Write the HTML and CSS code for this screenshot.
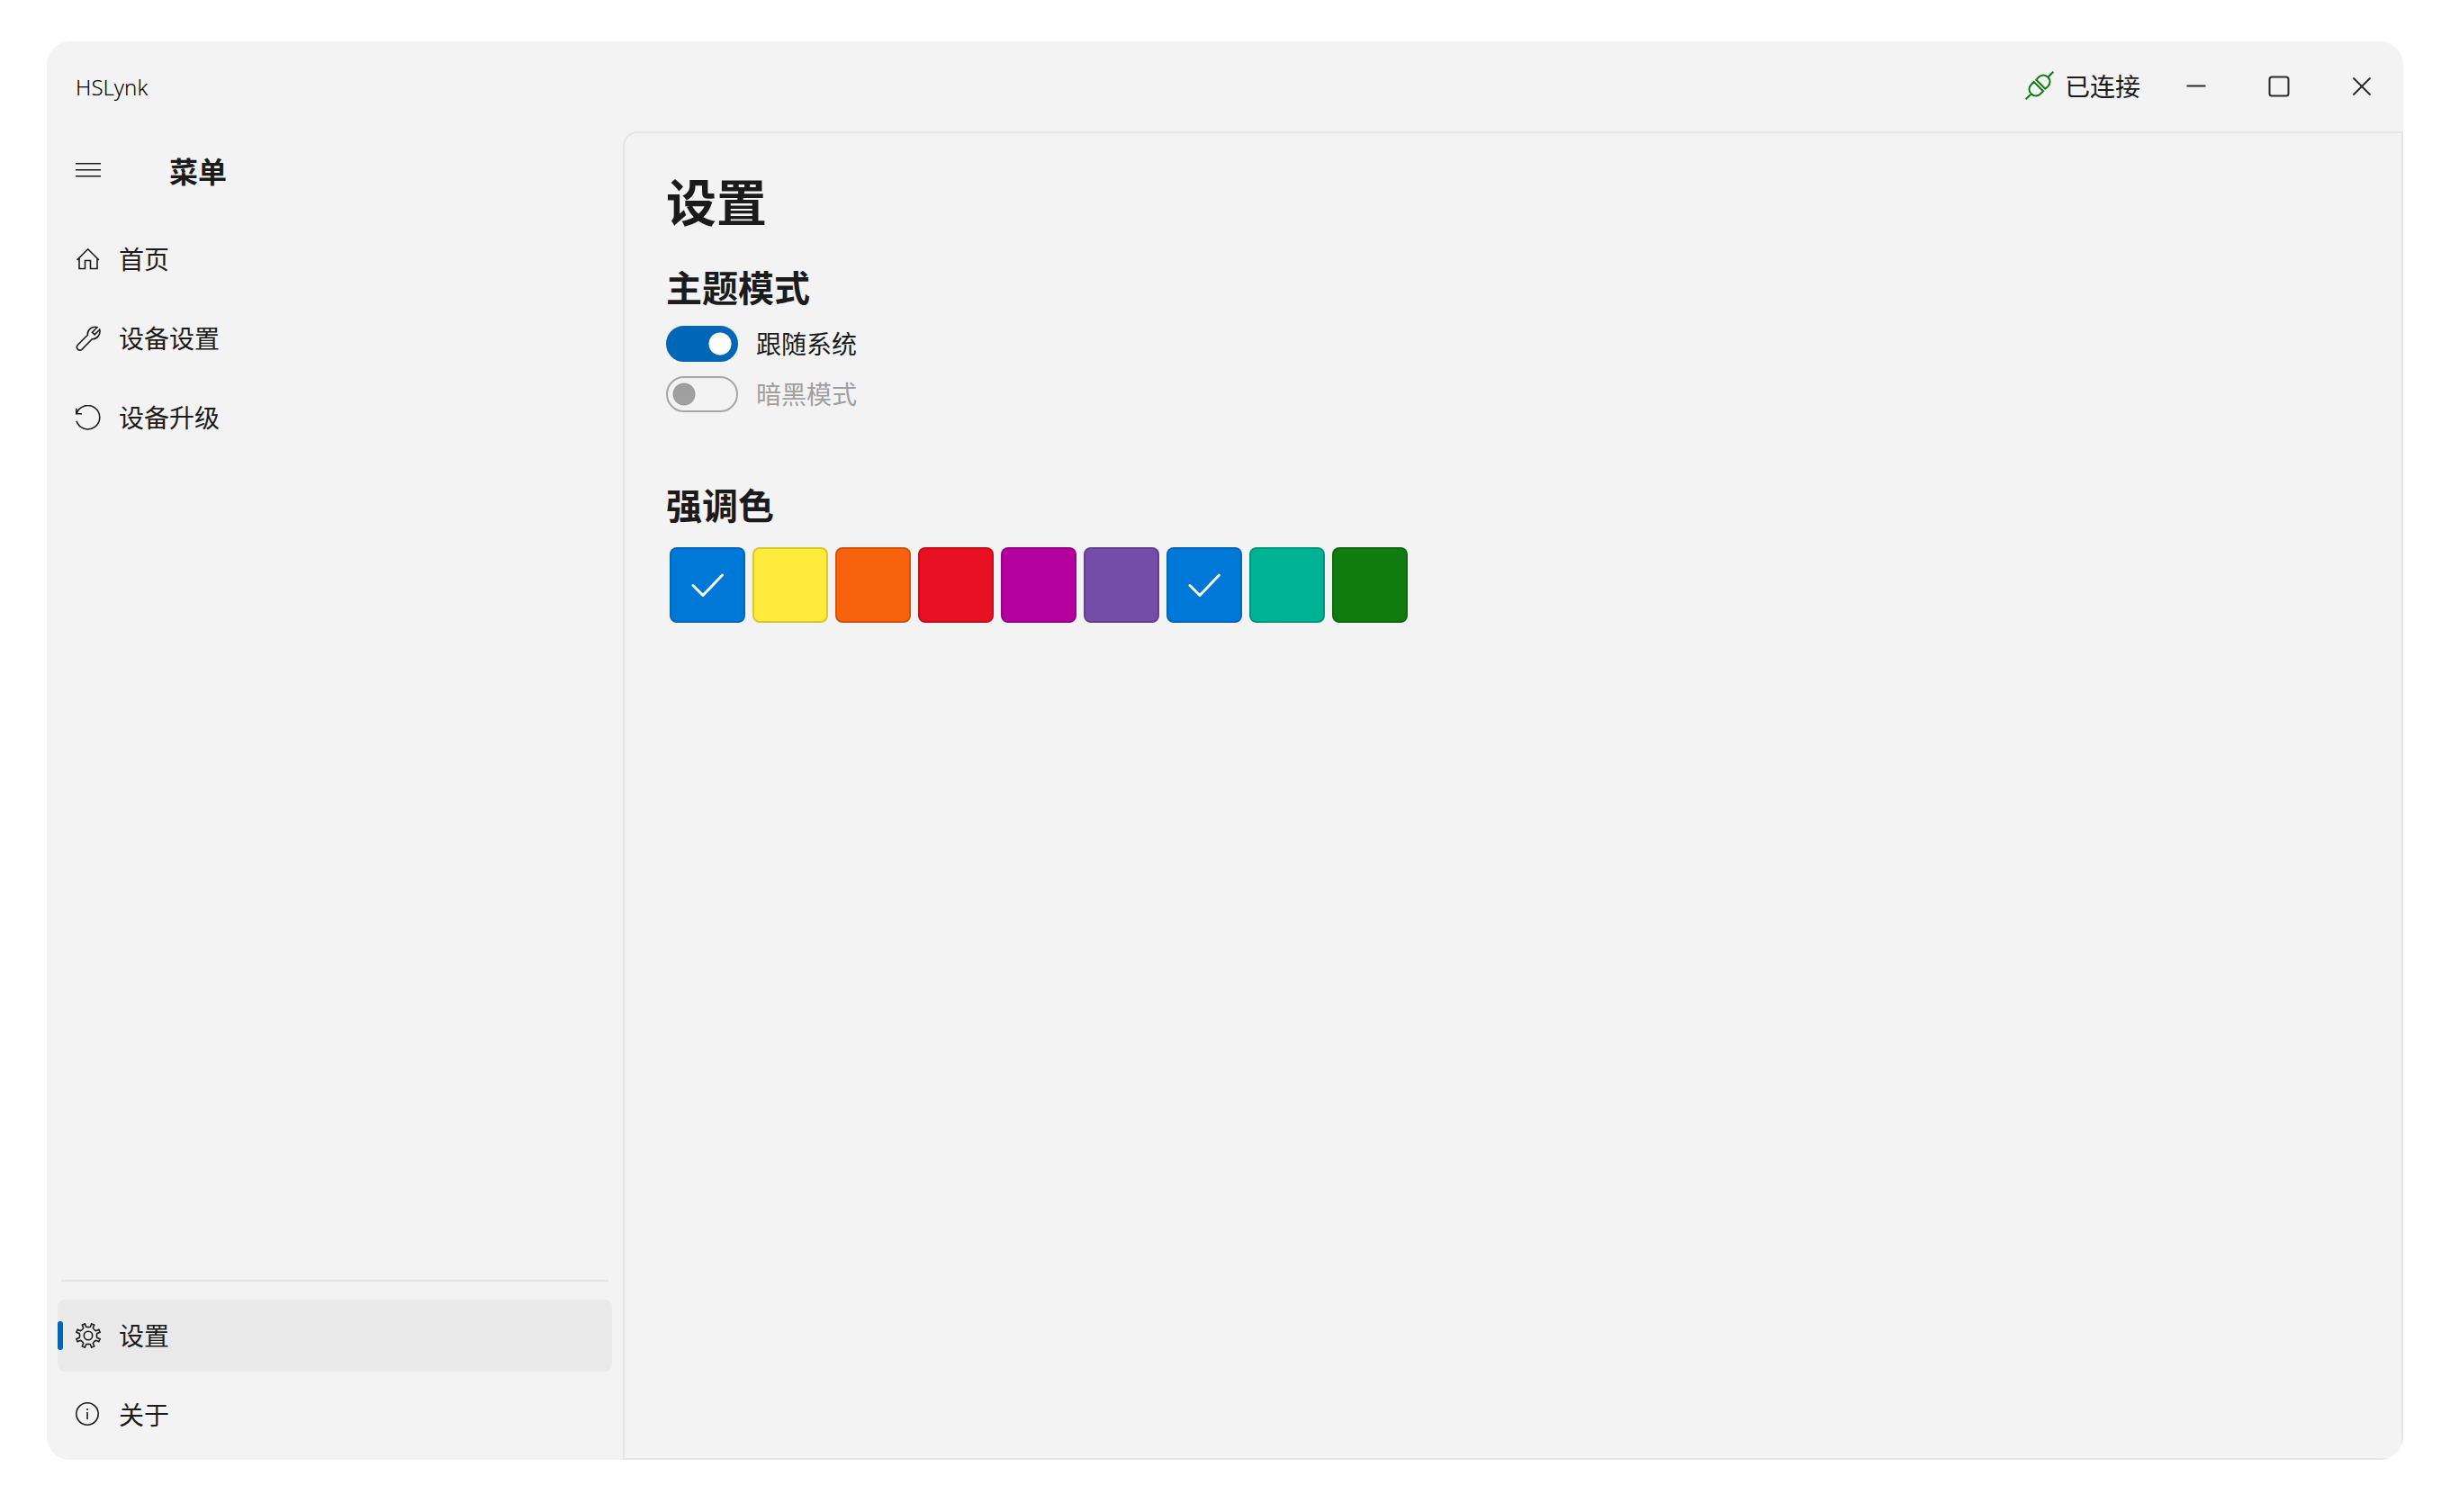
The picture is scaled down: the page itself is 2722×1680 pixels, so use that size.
FILE: index.html
```html
<!DOCTYPE html>
<html lang="zh-CN">
<head>
<meta charset="utf-8">
<meta name="viewport" content="width=device-width, initial-scale=1">
<title>HSLynk</title>
<link rel="stylesheet" href="styles.css">
</head>
<body>
<div class="window">
  <header class="titlebar">
    <span class="app-name">HSLynk</span>
    <div class="status">
      <svg class="status-icon" viewBox="0 0 32 32" aria-hidden="true"><path d="M.7 31.300l6-6M25.300 6.700l6-6M9.700 12L20 22.300L17 25.300C14 28.300 9.700 28.300 6.700 25.300S3.700 18 6.700 15ZM12.300 9.700L22.300 19.700L25.300 17C28.300 14 28.300 9.700 25.300 6.700S18 3.700 15 6.700Z"/></svg>
      <span>已连接</span>
    </div>
    <div class="controls">
      <button class="control" type="button" aria-label="最小化"><svg viewBox="0 0 24 24"><path d="M1.500 11.500h21"/></svg></button>
      <button class="control" type="button" aria-label="最大化"><svg viewBox="0 0 24 24"><rect x="1.500" y="1.500" width="21" height="21" rx="2.500"/></svg></button>
      <button class="control" type="button" aria-label="关闭"><svg viewBox="0 0 24 24"><path d="M2.500 2.500l19 19M21.500 2.500l-19 19"/></svg></button>
    </div>
  </header>
  <div class="body">
    <nav class="sidebar">
      <div class="menu-head">
        <button class="menu-button" type="button" aria-label="菜单"><svg class="icon" viewBox="0 0 28 28"><path d="M0 6.700h28M0 13.700h28M0 20.700h28"/></svg></button>
        <h2 class="menu-title">菜单</h2>
      </div>
      <a class="nav-item" href="#home"><svg class="icon" viewBox="0 0 28 28"><path d="M1.500 15L13.700 2.800 26 15M4 12.500V24.500h6.500v-9h6v9h7.500V12.500"/></svg><span class="label">首页</span></a>
      <a class="nav-item" href="#device"><svg class="icon" viewBox="0 0 28 28"><path d="M24 1.700A8.300 8.300 0 0 0 13.300 10.300L1.900 21.800a3.500 3.500 0 0 0 4.800 4.800L18.300 14.700A8.300 8.300 0 0 0 26.700 4.300L21.200 9.800L18.500 7.200Z"/></svg><span class="label">设备设置</span></a>
      <a class="nav-item" href="#upgrade"><svg class="icon" viewBox="0 0 28 28"><path d="M.8 3.700V9.700h6.200M1 9.700A13.200 13.200 0 1 1 1 17.800"/></svg><span class="label">设备升级</span></a>
      <div class="spacer"></div>
      <hr class="divider">
      <a class="nav-item active" href="#settings" aria-current="page"><svg class="icon" viewBox="0 0 28 28"><circle cx="14" cy="14" r="4.700"/><path d="M10.300.900L11.700 4.200Q14 5 16.300 4.200L17.700.900L20.700 2.200L19.300 5.500Q20.400 7.600 22.500 8.700L25.800 7.300L27.100 10.300L23.800 11.700Q23 14 23.800 16.300L27.100 17.700L25.800 20.700L22.500 19.300Q20.400 20.400 19.300 22.500L20.700 25.800L17.700 27.100L16.300 23.800Q14 23 11.700 23.800L10.300 27.100L7.300 25.800L8.700 22.500Q7.600 20.400 5.500 19.300L2.200 20.700L.900 17.700L4.200 16.300Q5 14 4.200 11.700L.900 10.300L2.200 7.300L5.500 8.700Q7.600 7.600 8.700 5.500L7.300 2.200Z"/></svg><span class="label">设置</span></a>
      <a class="nav-item" href="#about"><svg class="icon" viewBox="0 0 28 28"><circle cx="13" cy="13" r="12.200"/><path d="M13 11V19M13 7v2"/></svg><span class="label">关于</span></a>
    </nav>
    <main class="content">
      <h1 class="page-title">设置</h1>
      <section class="group">
        <h2 class="group-title">主题模式</h2>
        <label class="switch-row"><input class="switch" type="checkbox" role="switch" checked><span class="label">跟随系统</span></label>
        <label class="switch-row disabled"><input class="switch" type="checkbox" role="switch" disabled><span class="label">暗黑模式</span></label>
      </section>
      <section class="group">
        <h2 class="group-title">强调色</h2>
        <div class="swatches">
          <button class="swatch blue" type="button" aria-label="默认"><svg viewBox="0 0 36 26"><path d="M2 13.500l11 11L34.500 2"/></svg></button>
          <button class="swatch yellow" type="button" aria-label="黄色"></button>
          <button class="swatch orange" type="button" aria-label="橙色"></button>
          <button class="swatch red" type="button" aria-label="红色"></button>
          <button class="swatch magenta" type="button" aria-label="洋红"></button>
          <button class="swatch purple" type="button" aria-label="紫色"></button>
          <button class="swatch blue" type="button" aria-label="蓝色"><svg viewBox="0 0 36 26"><path d="M2 13.500l11 11L34.500 2"/></svg></button>
          <button class="swatch teal" type="button" aria-label="青色"></button>
          <button class="swatch green" type="button" aria-label="绿色"></button>
        </div>
      </section>
    </main>
  </div>
</div>
</body>
</html>
```
FILE: styles.css
```css
* { box-sizing: border-box; }

body {
  margin: 0;
  min-height: 100vh;
  padding: 46px 52px 58px;
  display: flex;
  background: #fff;
  color: #1b1b1b;
  font-family: "Noto Sans CJK SC", sans-serif;
  font-size: 28px;
  line-height: 40px;
}

h1, h2 { margin: 0; font-weight: 700; }
button { padding: 0; border: 0; background: none; color: inherit; font: inherit; }
svg { display: block; flex: none; fill: none; stroke: currentColor; }

.window {
  flex: 1;
  display: flex;
  flex-direction: column;
  overflow: hidden;
  border-radius: 26px;
  background: #f3f3f3;
}

.titlebar { display: flex; align-items: center; height: 100px; padding-left: 32px; }
.app-name { flex: 1; padding-top: 2px; font-family: "Noto Sans", sans-serif; font-size: 24px; font-weight: 300; color: #000; }
.status { display: flex; align-items: center; gap: 12px; margin-right: 16px; padding-bottom: 2px; }
.status-icon { width: 32px; height: 32px; color: #0f7b0f; stroke-width: 2; }
.controls { display: flex; }
.control { display: grid; place-items: center; width: 92px; height: 92px; color: #2b2b2b; }
.control svg { width: 24px; height: 24px; stroke-width: 2; }

.body { flex: 1; display: flex; }

.sidebar { width: 640px; flex: none; display: flex; flex-direction: column; gap: 8px; padding: 0 12px 10px; }
.icon { width: 28px; height: 28px; stroke-width: 1.6; }
.label { padding-bottom: 2px; line-height: 38px; }
.menu-head { display: flex; align-items: center; height: 86px; margin-bottom: 8px; padding-left: 20px; }
.menu-button { margin-right: 76px; }
.menu-title { font-size: 32px; }
.nav-item {
  position: relative;
  display: flex;
  align-items: center;
  gap: 20px;
  height: 80px;
  padding-left: 20px;
  border-radius: 8px;
  color: inherit;
  text-decoration: none;
}
.active { background: #e9e9e9; }
.active::before {
  content: "";
  position: absolute;
  left: 0;
  top: 24px;
  width: 6px;
  height: 32px;
  border-radius: 3px;
  background: #0067b7;
}
.spacer { flex: 1; }
.divider { width: auto; margin: 0 4px 12px 4px; border: 0; border-top: 2px solid #e5e5e5; align-self: stretch; }

.content {
  flex: 1;
  padding: 38px 46px;
  border: 2px solid #e5e5e5;
  border-radius: 16px 0 0 0;
}
.page-title { margin-bottom: 32px; font-size: 56px; line-height: 72px; }
.group { margin-bottom: 74px; }
.group-title { margin-bottom: 16px; font-size: 40px; line-height: 56px; }
.switch-row { display: flex; align-items: center; gap: 20px; margin-bottom: 16px; }
.disabled { color: #9f9f9f; }
.switch {
  appearance: none;
  flex: none;
  width: 80px;
  height: 40px;
  margin: 0;
  border: 2px solid #a6a6a6;
  border-radius: 20px;
  background: radial-gradient(circle at 18px 18px, #9f9f9f 12px, transparent 13px);
}
.switch:checked {
  border-color: #0067b7;
  background: radial-gradient(circle at 58px 18px, #fff 12px, #0067b7 13px);
}

.swatches { display: flex; flex-wrap: wrap; gap: 8px; padding: 4px; }
.swatch {
  display: grid;
  place-items: center;
  width: 84px;
  height: 84px;
  border: 2px solid rgb(0 0 0 / 15%);
  border-radius: 8px;
}
.swatch svg { width: 36px; height: 26px; color: #fff; stroke-width: 3; stroke-linecap: round; }
.blue { background: #0078d7; }
.yellow { background: #ffeb3b; }
.orange { background: #f7630c; }
.red { background: #e81123; }
.magenta { background: #b4009e; }
.purple { background: #744da9; }
.teal { background: #00b294; }
.green { background: #107c10; }
```
